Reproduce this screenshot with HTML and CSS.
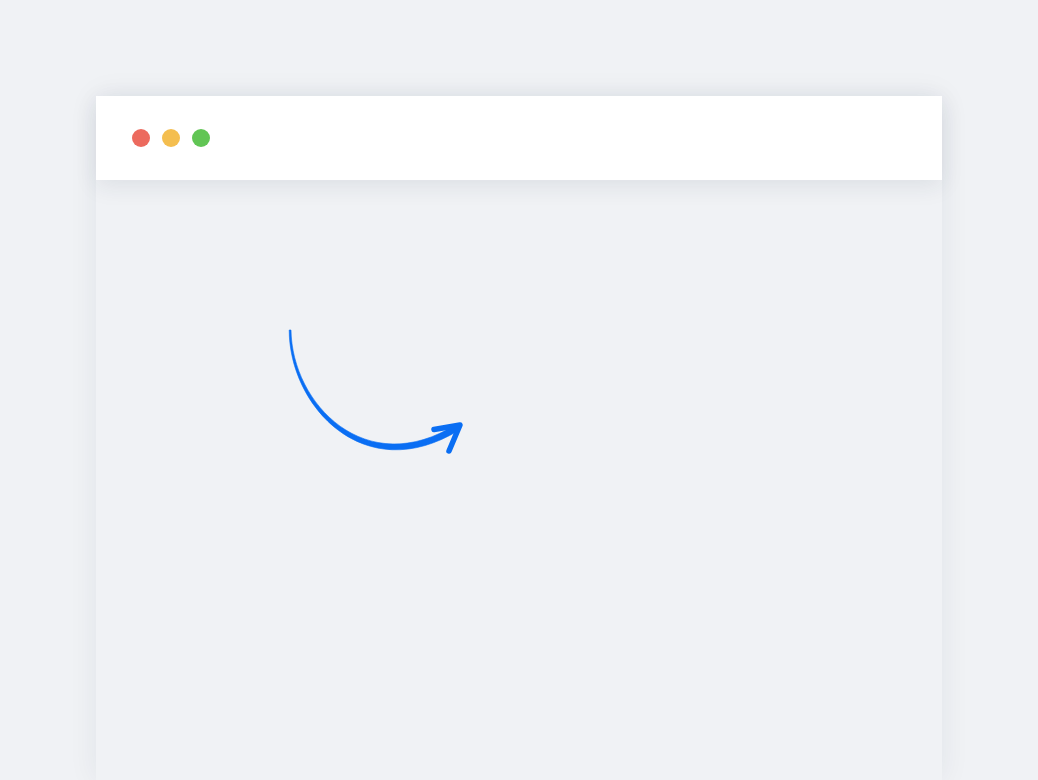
FILE: index.html
```html
<!DOCTYPE html>
<html>
<head>
<meta charset="utf-8">
<link rel="stylesheet" href="styles.css">
</head>
<body>
<div class="window">
  <div class="titlebar">
    <span class="dot red"></span>
    <span class="dot yellow"></span>
    <span class="dot green"></span>
  </div>
  <div class="content">
    <svg class="canvas" width="846" height="600" viewBox="96 180 846 600">
      <path class="arrow-body" d="M289.2,330 C289.2,406 364,488 458.5,430.5 L456,424.5 C366,481 292,404 291,330 Z"/>
      <path class="arrow-head" d="M434,429.5 L460,425 L449,451"/>
    </svg>
  </div>
</div>
</body>
</html>
```
FILE: styles.css
```css
html, body {
  margin: 0;
  padding: 0;
  height: 100%;
  overflow: hidden;
}
body {
  background: #f0f2f5;
  padding-top: 96px;
  box-sizing: border-box;
  font-family: "Liberation Sans", Arial, sans-serif;
}
.window {
  width: 846px;
  margin: 0 auto;
  height: 100%;
  background: #f0f2f5;
  box-shadow: 0 0 28px rgba(30, 40, 70, 0.07);
  display: flex;
  flex-direction: column;
}
.titlebar {
  height: 84px;
  flex: none;
  background: #ffffff;
  display: flex;
  align-items: center;
  gap: 12px;
  padding-left: 36px;
  box-shadow: 0 6px 22px rgba(30, 40, 70, 0.09);
  position: relative;
  z-index: 1;
}
.dot {
  width: 18px;
  height: 18px;
  border-radius: 50%;
  display: block;
}
.red { background: #ec6a5e; }
.yellow { background: #f4be4f; }
.green { background: #61c554; }
.content {
  flex: 1;
  overflow: hidden;
}
.canvas {
  display: block;
}
.arrow-body {
  fill: #0a6ef3;
  stroke: #0a6ef3;
  stroke-width: 0.6;
  stroke-linejoin: round;
}
.arrow-head {
  fill: none;
  stroke: #0a6ef3;
  stroke-width: 5.5;
  stroke-linecap: round;
  stroke-linejoin: round;
}
```
